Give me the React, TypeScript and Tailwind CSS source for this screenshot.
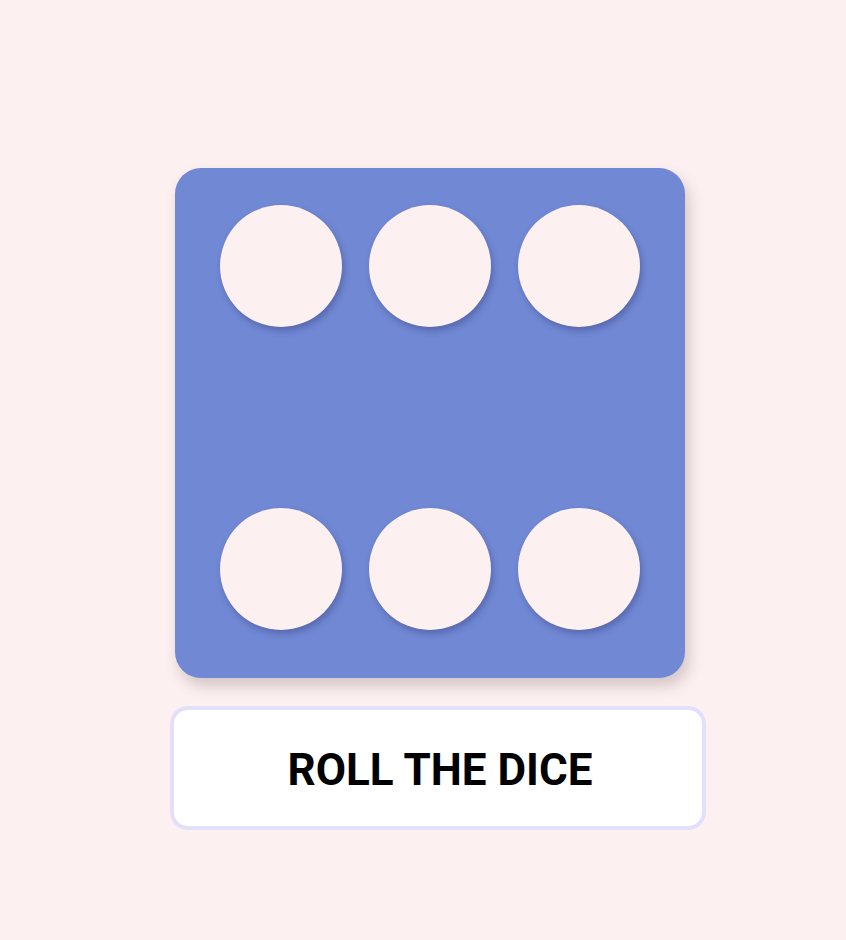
import React from "react";

function Dot() {
  return (
    <div className="w-[122px] h-[122px] rounded-full bg-[#fdf0f0] shadow-[2px_4px_6px_rgba(40,50,110,0.35)]" />
  );
}

export default function App() {
  return (
    <div className="min-h-[940px] w-full bg-[#fdf0f0] flex flex-col items-start pt-[168px]" style={{ fontFamily: "Roboto, 'Liberation Sans', sans-serif" }}>
      <div className="ml-[175px] w-[510px] h-[510px] rounded-[26px] bg-[#7188d4] shadow-[4px_8px_14px_rgba(90,70,80,0.25)] flex flex-col justify-between pl-[45px] pr-[45px] pt-[37px] pb-[48px]">
        <div className="flex justify-between">
          <Dot />
          <Dot />
          <Dot />
        </div>
        <div className="flex justify-between">
          <Dot />
          <Dot />
          <Dot />
        </div>
      </div>
      <button className="ml-[170px] mt-[28px] w-[536px] h-[124px] rounded-[18px] bg-white border-[4px] border-[#e3e0fb] flex items-center justify-center pl-[4px] pt-[4px] text-[44px] font-bold text-black">
        ROLL THE DICE
      </button>
    </div>
  );
}
